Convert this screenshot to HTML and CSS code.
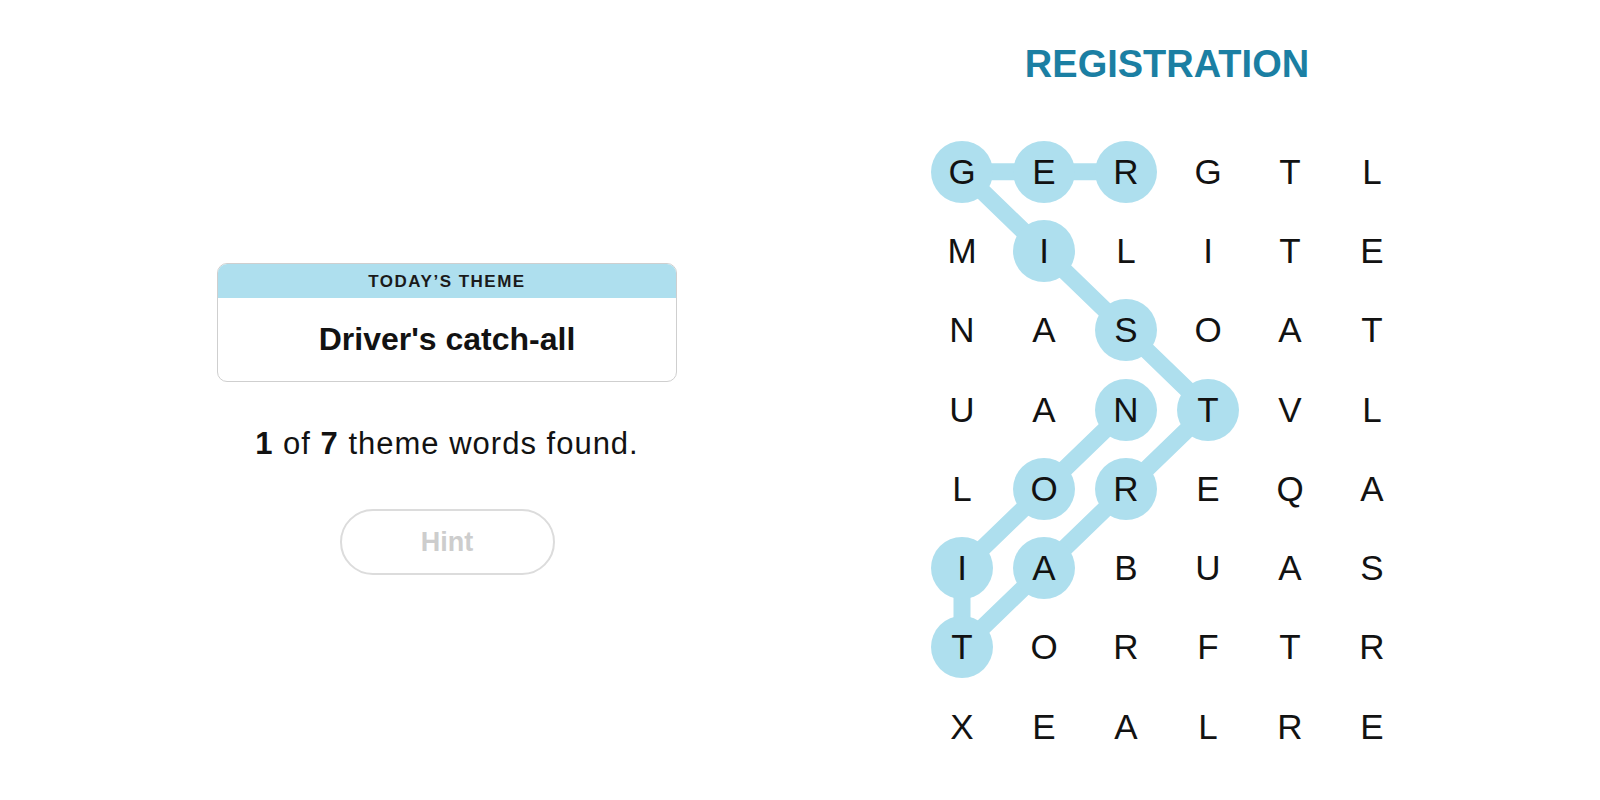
FILE: index.html
```html
<!DOCTYPE html>
<html lang="en">
<head>
    <meta charset="UTF-8" />
    <meta name="viewport" content="width=device-width, initial-scale=1.0"/>
    <title>Strands</title>
    <link rel="stylesheet" href="styles.css">
</head>
<body>
    <div class="game">
        <div class="sidebar">
            <div class="theme-box">
                <div class="theme-label">TODAY’S THEME</div>
                <div class="theme-clue">Driver's catch-all</div>
            </div>

            <p class="progress"><strong>1</strong> of <strong>7</strong> theme words found.</p>

            <button class="hint" disabled>Hint</button>
        </div>

        <div class="board">
            <h1 class="current-word">REGISTRATION</h1>

            <div class="grid-wrap">
                <svg class="trail" viewBox="0 0 492 634.4" width="492" height="634.4">
                    <polyline points="205,39.65 123,39.65 41,39.65 123,118.95 205,198.25 287,277.55 205,356.85 123,436.15 41,515.45 41,436.15 123,356.85 205,277.55" />
                </svg>
                <div class="grid">
                    <div class="cell"><span class="sel">G</span></div>
                    <div class="cell"><span class="sel">E</span></div>
                    <div class="cell"><span class="sel">R</span></div>
                    <div class="cell"><span>G</span></div>
                    <div class="cell"><span>T</span></div>
                    <div class="cell"><span>L</span></div>

                    <div class="cell"><span>M</span></div>
                    <div class="cell"><span class="sel">I</span></div>
                    <div class="cell"><span>L</span></div>
                    <div class="cell"><span>I</span></div>
                    <div class="cell"><span>T</span></div>
                    <div class="cell"><span>E</span></div>

                    <div class="cell"><span>N</span></div>
                    <div class="cell"><span>A</span></div>
                    <div class="cell"><span class="sel">S</span></div>
                    <div class="cell"><span>O</span></div>
                    <div class="cell"><span>A</span></div>
                    <div class="cell"><span>T</span></div>

                    <div class="cell"><span>U</span></div>
                    <div class="cell"><span>A</span></div>
                    <div class="cell"><span class="sel">N</span></div>
                    <div class="cell"><span class="sel">T</span></div>
                    <div class="cell"><span>V</span></div>
                    <div class="cell"><span>L</span></div>

                    <div class="cell"><span>L</span></div>
                    <div class="cell"><span class="sel">O</span></div>
                    <div class="cell"><span class="sel">R</span></div>
                    <div class="cell"><span>E</span></div>
                    <div class="cell"><span>Q</span></div>
                    <div class="cell"><span>A</span></div>

                    <div class="cell"><span class="sel">I</span></div>
                    <div class="cell"><span class="sel">A</span></div>
                    <div class="cell"><span>B</span></div>
                    <div class="cell"><span>U</span></div>
                    <div class="cell"><span>A</span></div>
                    <div class="cell"><span>S</span></div>

                    <div class="cell"><span class="sel">T</span></div>
                    <div class="cell"><span>O</span></div>
                    <div class="cell"><span>R</span></div>
                    <div class="cell"><span>F</span></div>
                    <div class="cell"><span>T</span></div>
                    <div class="cell"><span>R</span></div>

                    <div class="cell"><span>X</span></div>
                    <div class="cell"><span>E</span></div>
                    <div class="cell"><span>A</span></div>
                    <div class="cell"><span>L</span></div>
                    <div class="cell"><span>R</span></div>
                    <div class="cell"><span>E</span></div>
                </div>
            </div>
        </div>
    </div>
</body>
</html>
```

FILE: styles.css
```css
body {
    margin: 0;
    font-family: 'Liberation Sans', Arial, sans-serif;
    background: #fff;
    color: #121212;
}
.game {
    display: flex;
    align-items: flex-start;
}
.sidebar {
    width: 460px;
    margin-left: 217px;
    padding-top: 263px;
    display: flex;
    flex-direction: column;
    align-items: center;
}
.theme-box {
    width: 100%;
    box-sizing: border-box;
    border: 1px solid #cfcfcf;
    border-radius: 10px;
    overflow: hidden;
}
.theme-label {
    height: 34px;
    line-height: 35px;
    background: #aedfee;
    text-align: center;
    font-size: 17px;
    font-weight: 700;
    letter-spacing: 1.5px;
    color: #1a1a1a;
}
.theme-clue {
    height: 83px;
    line-height: 83px;
    text-align: center;
    font-size: 32px;
    font-weight: 700;
    color: #121212;
}
.progress {
    margin: 44px 0 0;
    font-size: 31px;
    line-height: 36px;
    letter-spacing: 1px;
    color: #121212;
}
.progress strong {
    font-weight: 700;
}
.hint {
    margin-top: 47px;
    width: 215px;
    height: 66px;
    border: 2px solid #dcdcdc;
    border-radius: 33px;
    background: #fff;
    font-family: 'Liberation Sans', Arial, sans-serif;
    font-size: 27px;
    font-weight: 700;
    color: #cdcdcd;
}
.board {
    margin-left: 244px;
    width: 492px;
    padding-top: 42px;
}
.current-word {
    margin: 0;
    text-align: center;
    font-size: 38px;
    line-height: 44px;
    font-weight: 700;
    color: #1b7fa3;
}
.grid-wrap {
    position: relative;
    margin-top: 46px;
    width: 492px;
}
.trail {
    position: absolute;
    left: 0;
    top: 0;
}
.trail polyline {
    fill: none;
    stroke: #aedfee;
    stroke-width: 17;
    stroke-linejoin: round;
    stroke-linecap: round;
}
.grid {
    display: grid;
    grid-template-columns: repeat(6, 82px);
    grid-template-rows: repeat(8, 79.3px);
}
.cell {
    position: relative;
    display: flex;
    align-items: center;
    justify-content: center;
}
.cell span {
    width: 62px;
    height: 62px;
    border-radius: 50%;
    display: flex;
    align-items: center;
    justify-content: center;
    font-size: 35px;
    color: #121212;
}
.cell span.sel {
    background: #aedfee;
}
```
